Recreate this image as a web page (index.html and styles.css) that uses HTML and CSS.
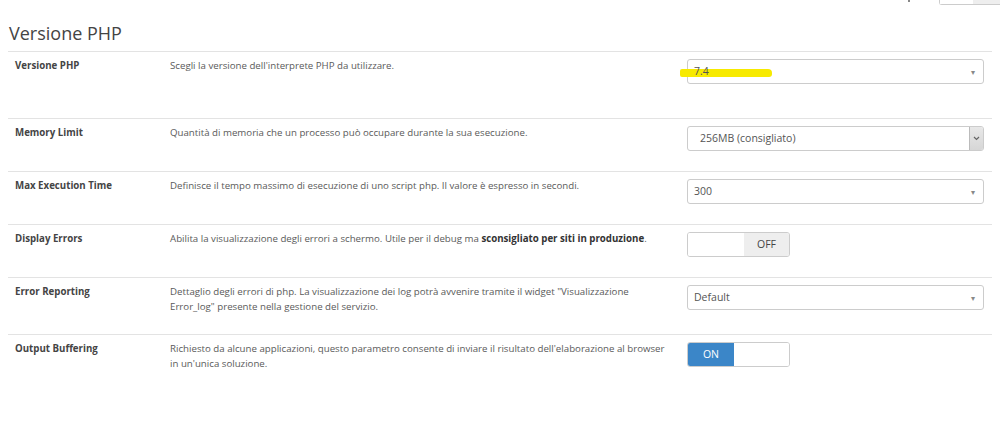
FILE: index.html
```html
<!DOCTYPE html>
<html lang="it">
<head>
    <meta charset="UTF-8">
    <meta name="viewport" content="width=device-width, initial-scale=1.0">
    <title>Versione PHP</title>
    <link rel="stylesheet" href="styles.css">
</head>
<body>

<div class="top-bar">
    <span class="top-caret"></span>
    <div class="top-btn">
        <span class="top-btn-a"></span>
        <span class="top-btn-b"></span>
    </div>
</div>

<div class="php-panel">
    <h2 class="panel-title">Versione PHP</h2>

    <div class="setting-row row-first">
        <div class="setting-label">Versione PHP</div>
        <div class="setting-desc">Scegli la versione dell'interprete PHP da utilizzare.</div>
        <div class="setting-control">
            <div class="select-box">
                <span class="marker"></span>
                <span class="select-value">7.4</span>
                <span class="select-arrow">&#9662;</span>
            </div>
        </div>
    </div>

    <div class="setting-row">
        <div class="setting-label">Memory Limit</div>
        <div class="setting-desc">Quantità di memoria che un processo può occupare durante la sua esecuzione.</div>
        <div class="setting-control">
            <div class="select-box native">
                <span class="select-value">256MB (consigliato)</span>
                <span class="native-arrow">
                    <svg width="7" height="5" viewBox="0 0 7 5"><path d="M1 1l2.5 2.5L6 1" fill="none" stroke="#666" stroke-width="1.2"/></svg>
                </span>
            </div>
        </div>
    </div>

    <div class="setting-row">
        <div class="setting-label">Max Execution Time</div>
        <div class="setting-desc">Definisce il tempo massimo di esecuzione di uno script php. Il valore è espresso in secondi.</div>
        <div class="setting-control">
            <div class="select-box">
                <span class="select-value">300</span>
                <span class="select-arrow">&#9662;</span>
            </div>
        </div>
    </div>

    <div class="setting-row">
        <div class="setting-label">Display Errors</div>
        <div class="setting-desc">Abilita la visualizzazione degli errori a schermo. Utile per il debug ma <strong>sconsigliato per siti in produzione</strong>.</div>
        <div class="setting-control">
            <div class="switch off">
                <span class="switch-blank"></span>
                <span class="switch-off">OFF</span>
            </div>
        </div>
    </div>

    <div class="setting-row">
        <div class="setting-label">Error Reporting</div>
        <div class="setting-desc">Dettaglio degli errori di php. La visualizzazione dei log potrà avvenire tramite il widget "Visualizzazione<br>Error_log" presente nella gestione del servizio.</div>
        <div class="setting-control">
            <div class="select-box">
                <span class="select-value">Default</span>
                <span class="select-arrow">&#9662;</span>
            </div>
        </div>
    </div>

    <div class="setting-row row-last">
        <div class="setting-label">Output Buffering</div>
        <div class="setting-desc">Richiesto da alcune applicazioni, questo parametro consente di inviare il risultato dell'elaborazione al browser in un'unica soluzione.</div>
        <div class="setting-control">
            <div class="switch on">
                <span class="switch-on">ON</span>
                <span class="switch-blank"></span>
            </div>
        </div>
    </div>
</div>

</body>
</html>
```

FILE: styles.css
```css
body {
    margin: 0;
    padding: 0;
    background-color: #fff;
    color: #555;
    font-family: "Open Sans", Arial, sans-serif;
}

/* frammento della barra in alto */
.top-bar {
    height: 5px;
    overflow: hidden;
    display: flex;
    justify-content: flex-end;
    align-items: flex-start;
}

.top-caret {
    width: 2px;
    height: 2px;
    background-color: #888;
    margin-right: 29px;
}

.top-btn {
    display: flex;
    width: 60px;
    height: 4px;
    border: 1px solid #ccc;
    border-top: none;
    border-right: none;
    border-radius: 0 0 0 3px;
}

.top-btn-a {
    width: 33px;
    background-color: #fff;
}

.top-btn-b {
    flex: 1;
    background-color: #eee;
}

.php-panel {
    margin: 0 8px;
}

.panel-title {
    font-size: 18px;
    font-weight: 400;
    color: #444;
    margin: 0;
    padding: 10px 0 0 1px;
    line-height: 36px;
}

.setting-row {
    display: grid;
    grid-template-columns: 155px 517px 297px;
    padding: 6px 0 20px 7px;
    border-top: 1px solid #e3e3e3;
    font-size: 9.7px;
    line-height: 15px;
}

.row-first {
    padding-bottom: 34px;
}

.setting-label {
    font-weight: 700;
    color: #444;
}

.setting-desc {
    padding-right: 16px;
    color: #5a5a5a;
}

.setting-desc strong {
    color: #333;
}

.setting-control {
    padding-top: 1px;
}

.select-box {
    position: relative;
    display: flex;
    align-items: center;
    height: 23px;
    border: 1px solid #ccc;
    border-radius: 3px;
    padding-left: 6px;
    font-size: 10.5px;
    color: #555;
    background-color: #fff;
}

.select-value {
    flex: 1;
    position: relative;
}

.select-arrow {
    font-size: 8px;
    color: #888;
    margin-right: 8px;
}

/* evidenziatore giallo */
.marker {
    position: absolute;
    left: -8px;
    top: 9px;
    width: 92px;
    height: 8px;
    background-color: #f7ea00;
    border-radius: 2px 4px 3px 2px;
}

.native {
    padding-left: 0;
}

.native .select-value {
    padding-left: 12px;
}

.native-arrow {
    width: 13px;
    height: 100%;
    display: flex;
    align-items: center;
    justify-content: center;
    border-left: 1px solid #bbb;
    background: linear-gradient(#e8e8e8, #d6d6d6);
    border-radius: 0 2px 2px 0;
}

.switch {
    display: flex;
    width: 101px;
    height: 23px;
    border: 1px solid #ccc;
    border-radius: 3px;
    overflow: hidden;
    font-size: 10.5px;
}

.switch-blank {
    flex: 1;
    background-color: #fff;
}

.switch-off {
    width: 45px;
    display: flex;
    align-items: center;
    justify-content: center;
    background-color: #eee;
    color: #444;
}

.switch-on {
    width: 46px;
    display: flex;
    align-items: center;
    justify-content: center;
    background-color: #3b86c8;
    color: #fff;
}
```
